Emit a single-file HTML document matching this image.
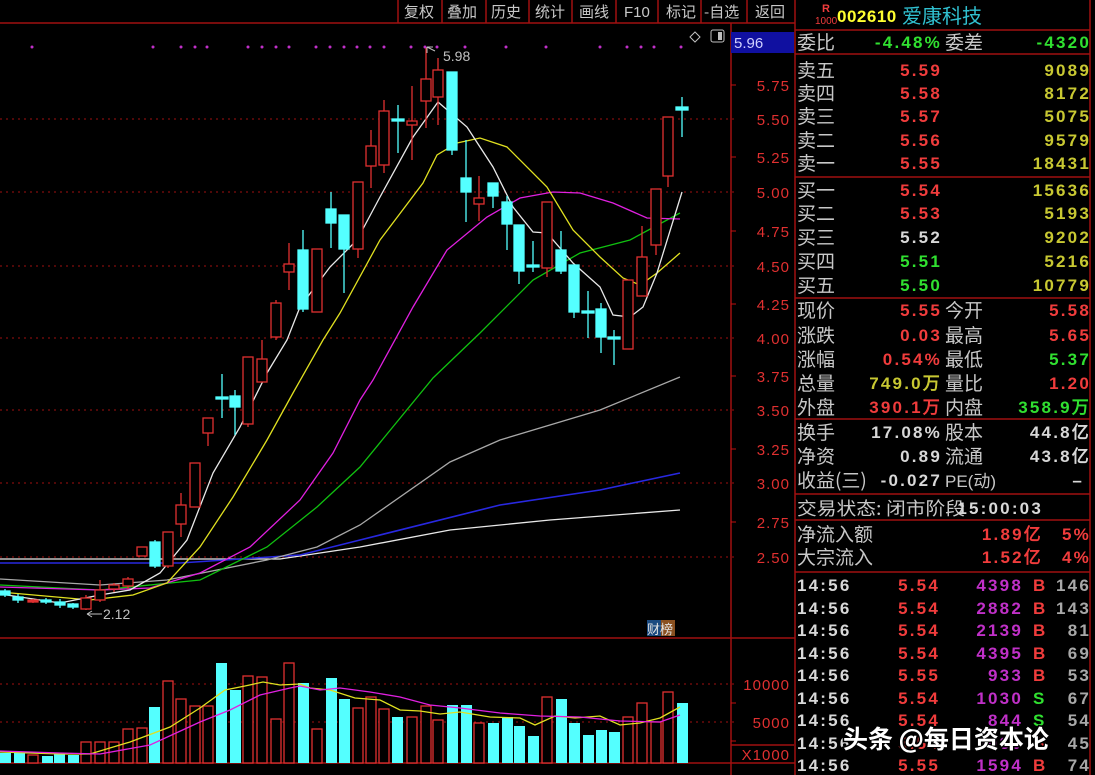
<!DOCTYPE html>
<html><head><meta charset="utf-8"><style>
html,body{margin:0;padding:0;background:#000;width:1095px;height:775px;overflow:hidden}
svg{display:block}
.lb{font-family:"Noto Sans CJK SC","WenQuanYi Zen Hei",sans-serif;font-size:19px;fill:#c8c8c8}
.n{font-family:"Liberation Sans",sans-serif;font-weight:bold;font-size:17px;letter-spacing:2.2px}
.ax{font-family:"Liberation Sans",sans-serif;font-size:15px;fill:#e03030;letter-spacing:1px}
.tb{font-family:"Noto Sans CJK SC",sans-serif;font-size:15px;fill:#c8c8c8}
.r{fill:#f03c3c}.g{fill:#30e030}.y{fill:#c8c832}.w{fill:#d8d8d8}.p{fill:#c030c8}
</style></head><body>
<svg width="1095" height="775" xmlns="http://www.w3.org/2000/svg">
<rect width="1095" height="775" fill="#000"/>
<g stroke="#a01010" stroke-width="1.5" fill="none">
<path d="M0 23H795M398 0V23M442 0V23M486 0V23M529 0V23M572 0V23M616 0V23M658 0V23M701 0V23M747 0V23M795 0V775M1090 0V775M731 23V775M795 30H1090M795 54H1090M795 177H1090M795 298H1090M795 419H1090M795 494H1090M795 520H1090M795 572H1090"/>
<path d="M0 638H795M0 763H795M731 745H794"/>
</g>
<g class="tb">
<text x="404" y="17">复权</text><text x="447" y="17">叠加</text><text x="491" y="17">历史</text><text x="535" y="17">统计</text><text x="579" y="17">画线</text>
<text x="624" y="17" font-family="Liberation Sans">F10</text><text x="666" y="17">标记</text><text x="704" y="17">-自选</text><text x="755" y="17">返回</text>
</g>
<g fill="#c030c8">
<circle cx="32" cy="47" r="1.5"/><circle cx="153" cy="47" r="1.5"/><circle cx="181" cy="47" r="1.5"/><circle cx="195" cy="47" r="1.5"/><circle cx="207" cy="47" r="1.5"/><circle cx="248" cy="47" r="1.5"/><circle cx="262" cy="47" r="1.5"/><circle cx="276" cy="47" r="1.5"/><circle cx="289" cy="47" r="1.5"/><circle cx="316" cy="47" r="1.5"/><circle cx="330" cy="47" r="1.5"/><circle cx="344" cy="47" r="1.5"/><circle cx="357" cy="47" r="1.5"/><circle cx="370" cy="47" r="1.5"/><circle cx="384" cy="47" r="1.5"/><circle cx="411" cy="47" r="1.5"/><circle cx="425" cy="47" r="1.5"/><circle cx="437" cy="47" r="1.5"/><circle cx="465" cy="47" r="1.5"/><circle cx="506" cy="47" r="1.5"/><circle cx="546" cy="47" r="1.5"/><circle cx="600" cy="47" r="1.5"/><circle cx="627" cy="47" r="1.5"/><circle cx="641" cy="47" r="1.5"/><circle cx="654" cy="47" r="1.5"/><circle cx="681" cy="47" r="1.5"/>
</g>
<path d="M690 37l5-5 5 5-5 5z" fill="none" stroke="#c0c0c0"/>
<rect x="711" y="30" width="13" height="12" rx="2" fill="none" stroke="#c0c0c0"/><rect x="718" y="32" width="4" height="8" fill="#c0c0c0"/>
<rect x="731" y="32" width="63" height="21" fill="#1010a0"/>
<text x="734" y="48" font-family="Liberation Sans" font-size="15" fill="#d0d0ff">5.96</text>
<g stroke="#a01010" stroke-dasharray="2,4" stroke-width="1">
<path d="M0 119H736M0 192H736M0 266H736M0 338H736M0 410H736M0 483H736M0 557H736M0 684H736M0 722H736"/>
</g>
<g stroke="#c01010"><path d="M731 85h5M731 157h5M731 231h5M731 304h5M731 376h5M731 449h5M731 522h5M731 703h5M731 741h5"/></g>
<g class="ax" text-anchor="end">
<text x="790" y="91">5.75</text><text x="790" y="125">5.50</text><text x="790" y="163">5.25</text><text x="790" y="198">5.00</text><text x="790" y="237">4.75</text><text x="790" y="272">4.50</text><text x="790" y="310">4.25</text><text x="790" y="344">4.00</text><text x="790" y="382">3.75</text><text x="790" y="416">3.50</text><text x="790" y="455">3.25</text><text x="790" y="489">3.00</text><text x="790" y="528">2.75</text><text x="790" y="563">2.50</text>
<text x="790" y="690">10000</text><text x="790" y="728">5000</text><text x="790" y="760">X1000</text>
</g>
<g fill="none" stroke-width="1.3">
<polyline stroke="#e8e8e8" points="0,559 280,559 360,547 450,530 550,520 680,510"/>
<polyline stroke="#2828e0" stroke-width="1.6" points="0,563 180,563 300,555 360,540 500,505 600,490 680,473"/>
<polyline stroke="#a8a8a8" points="0,579 100,585 167,580 267,560 317,547 360,525 450,462 500,440 600,410 680,377"/>
<polyline stroke="#10c010" points="0,585 100,590 200,580 267,547 317,507 360,467 433,378 480,333 533,280 580,253 630,240 680,213"/>
<polyline stroke="#e020e0" points="0,587 100,590 150,588 200,573 250,547 300,500 333,453 360,400 373,380 413,307 447,250 487,217 520,198 553,192 580,193 613,203 647,218 680,219"/>
<polyline stroke="#e0e020" points="0,592 90,600 133,595 167,583 200,547 233,497 267,440 293,393 323,340 340,313 380,240 423,183 437,155 457,143 480,138 507,147 547,187 573,230 600,257 623,278 640,285 657,273 680,253"/>
<polyline stroke="#e8e8e8" points="0,594 60,603 100,595 130,590 160,573 187,540 213,473 240,427 267,373 287,340 300,307 330,267 357,240 380,197 413,137 438,102 467,127 493,167 513,207 533,232 547,233 573,263 600,287 613,315 630,317 643,307 657,273 682,192"/>
</g>
<g stroke="#e03030" fill="#000" stroke-width="1.3">
<path d="M33 599V603M86 595V610M100 580V602M114 583V592M128 577V589M142 547V556M168 532V568M181 493V537M195 463V507M208 418V446M248 357V427M262 340V382M276 300V340M289 243V290M317 249V312M358 182V258M371 130V188M384 100V173M412 86V160M426 48V128M438 58V125M479 176V221M547 202V277M628 280V349M642 226V296M656 189V255M668 117V187"/>
<rect x="28" y="600" width="10" height="2" fill="#e03030"/>
<rect x="81" y="598" width="10" height="11"/><rect x="95" y="590" width="10" height="10"/><rect x="109" y="585" width="10" height="4"/><rect x="123" y="579" width="10" height="7"/><rect x="137" y="547" width="10" height="9"/><rect x="163" y="532" width="10" height="34"/><rect x="176" y="505" width="10" height="19"/><rect x="190" y="463" width="10" height="44"/><rect x="203" y="418" width="10" height="15"/><rect x="243" y="357" width="10" height="67"/><rect x="257" y="359" width="10" height="23"/><rect x="271" y="303" width="10" height="34"/><rect x="284" y="264" width="10" height="8"/><rect x="312" y="249" width="10" height="63"/><rect x="353" y="182" width="10" height="67"/><rect x="366" y="146" width="10" height="20"/><rect x="379" y="111" width="10" height="54"/><rect x="407" y="121" width="10" height="4"/><rect x="421" y="79" width="10" height="22"/><rect x="433" y="70" width="10" height="27"/><rect x="474" y="198" width="10" height="6"/><rect x="542" y="202" width="10" height="66"/><rect x="623" y="280" width="10" height="69"/><rect x="637" y="257" width="10" height="39"/><rect x="651" y="189" width="10" height="56"/><rect x="663" y="117" width="10" height="59"/>
</g>
<g stroke="#54ffff" fill="#54ffff" stroke-width="1.3">
<path d="M5 589V597M18 594V603M46 598V604M60 599V608M73 603V609M155 540V568M222 374V418M235 390V435M303 230V312M331 192V248M344 215V293M398 105V153M452 72V155M466 140V222M493 183V208M507 196V250M519 225V284M533 241V272M561 231V274M574 265V318M588 291V338M601 303V353M614 330V365M682 97V137"/>
<rect x="0" y="591" width="10" height="4"/><rect x="13" y="597" width="10" height="3"/><rect x="41" y="600" width="10" height="2"/><rect x="55" y="602" width="10" height="3"/><rect x="68" y="604" width="10" height="3"/><rect x="150" y="542" width="10" height="24"/><rect x="216" y="397" width="12" height="2"/><rect x="230" y="396" width="10" height="11"/><rect x="298" y="250" width="10" height="59"/><rect x="326" y="209" width="10" height="14"/><rect x="339" y="215" width="10" height="34"/><rect x="392" y="119" width="12" height="2"/><rect x="447" y="72" width="10" height="78"/><rect x="461" y="178" width="10" height="14"/><rect x="488" y="183" width="10" height="13"/><rect x="502" y="202" width="10" height="22"/><rect x="514" y="225" width="10" height="46"/><rect x="527" y="265" width="12" height="2"/><rect x="556" y="250" width="10" height="21"/><rect x="569" y="265" width="10" height="47"/><rect x="582" y="311" width="12" height="2"/><rect x="596" y="309" width="10" height="28"/><rect x="608" y="337" width="12" height="2"/><rect x="676" y="107" width="12" height="3"/>
</g>
<path d="M427 47l8 4M427 47v6M427 47h6" stroke="#c0c0c0" fill="none"/>
<text x="443" y="61" font-family="Liberation Sans" font-size="14" fill="#c0c0c0">5.98</text>
<path d="M87 614h15M87 614l5-3M87 614l5 3" stroke="#c0c0c0" fill="none"/>
<text x="103" y="619" font-family="Liberation Sans" font-size="14" fill="#c0c0c0">2.12</text>
<rect x="647" y="620" width="14" height="16" fill="#1a4a80"/><rect x="661" y="620" width="14" height="16" fill="#8a5020"/>
<text x="647" y="634" font-family="Noto Sans CJK SC" font-size="13" fill="#e0e0e0">财榜</text>
<g stroke="#e03030" fill="#000" stroke-width="1.3">
<rect x="28" y="755" width="10" height="8"/><rect x="81" y="742" width="10" height="21"/><rect x="95" y="742" width="10" height="21"/><rect x="109" y="742" width="10" height="21"/><rect x="123" y="729" width="10" height="34"/><rect x="137" y="728" width="10" height="35"/><rect x="163" y="681" width="10" height="82"/><rect x="176" y="699" width="10" height="64"/><rect x="190" y="706" width="10" height="57"/><rect x="203" y="706" width="10" height="57"/><rect x="243" y="676" width="10" height="87"/><rect x="257" y="677" width="10" height="86"/><rect x="271" y="719" width="10" height="44"/><rect x="284" y="663" width="10" height="100"/><rect x="312" y="729" width="10" height="34"/><rect x="353" y="708" width="10" height="55"/><rect x="366" y="697" width="10" height="66"/><rect x="379" y="709" width="10" height="54"/><rect x="407" y="717" width="10" height="46"/><rect x="421" y="706" width="10" height="57"/><rect x="433" y="720" width="10" height="43"/><rect x="474" y="723" width="10" height="40"/><rect x="542" y="697" width="10" height="66"/><rect x="623" y="717" width="10" height="46"/><rect x="637" y="703" width="10" height="60"/><rect x="651" y="722" width="10" height="41"/><rect x="663" y="692" width="10" height="71"/>
</g>
<g fill="#54ffff">
<rect x="0" y="753" width="11" height="10"/><rect x="14" y="753" width="11" height="10"/><rect x="42" y="756" width="11" height="7"/><rect x="54" y="754" width="11" height="9"/><rect x="68" y="755" width="11" height="8"/><rect x="149" y="707" width="11" height="56"/><rect x="216" y="663" width="11" height="100"/><rect x="230" y="690" width="11" height="73"/><rect x="298" y="683" width="11" height="80"/><rect x="326" y="678" width="11" height="85"/><rect x="339" y="699" width="11" height="64"/><rect x="392" y="717" width="11" height="46"/><rect x="447" y="705" width="11" height="58"/><rect x="461" y="705" width="11" height="58"/><rect x="488" y="723" width="11" height="40"/><rect x="502" y="717" width="11" height="46"/><rect x="514" y="726" width="11" height="37"/><rect x="528" y="736" width="11" height="27"/><rect x="556" y="699" width="11" height="64"/><rect x="569" y="723" width="11" height="40"/><rect x="583" y="735" width="11" height="28"/><rect x="596" y="730" width="11" height="33"/><rect x="609" y="732" width="11" height="31"/><rect x="677" y="703" width="11" height="60"/>
</g>
<g fill="none" stroke-width="1.3">
<polyline stroke="#e0e020" points="0,752 60,754 90,754 130,742 170,727 200,708 225,690 245,686 263,682 280,685 300,684 310,688 330,690 355,698 380,700 400,710 420,711 440,714 460,712 490,717 520,718 535,725 555,716 575,718 600,716 620,725 640,723 660,718 680,707"/>
<polyline stroke="#e020e0" points="0,751 60,753 100,754 150,745 200,722 230,710 260,695 290,688 300,686 320,690 340,688 370,692 400,697 430,705 460,708 500,713 540,716 580,717 620,721 660,722 680,715"/>
</g>
<text x="822" y="12" font-family="Liberation Sans" font-size="11" font-weight="bold" fill="#f03c3c">R</text>
<text x="815" y="24" font-family="Liberation Sans" font-size="10" fill="#f03c3c">1000</text>
<text x="837" y="22" font-family="Liberation Sans" font-weight="bold" font-size="17" fill="#ffff30" letter-spacing="0.5">002610</text>
<text x="902" y="23" font-family="Noto Sans CJK SC" font-size="20" fill="#30c0d0">爱康科技</text>
<g class="lb">
<text x="797" y="49">委比</text><text x="945" y="49">委差</text>
<text x="797" y="77">卖五</text><text x="797" y="100">卖四</text><text x="797" y="123">卖三</text><text x="797" y="147">卖二</text><text x="797" y="170">卖一</text>
<text x="797" y="197">买一</text><text x="797" y="220">买二</text><text x="797" y="244">买三</text><text x="797" y="268">买四</text><text x="797" y="292">买五</text>
<text x="797" y="317">现价</text><text x="945" y="317">今开</text>
<text x="797" y="342">涨跌</text><text x="945" y="342">最高</text>
<text x="797" y="366">涨幅</text><text x="945" y="366">最低</text>
<text x="797" y="390">总量</text><text x="945" y="390">量比</text>
<text x="797" y="414">外盘</text><text x="945" y="414">内盘</text>
<text x="797" y="439">换手</text><text x="945" y="439">股本</text>
<text x="797" y="463">净资</text><text x="945" y="463">流通</text>
<text x="797" y="487">收益(三)</text><text x="945" y="487" font-family="Liberation Sans" font-size="17">PE(动)</text>
<text x="797" y="515" font-size="18" textLength="168" lengthAdjust="spacingAndGlyphs">交易状态: 闭市阶段</text>
<text x="797" y="541">净流入额</text><text x="797" y="564">大宗流入</text>
</g>
<g class="n" text-anchor="end">
<text x="942" y="48" class="g">-4.48%</text><text x="1091" y="48" class="g">-4320</text>
<text x="942" y="76" class="r">5.59</text><text x="1091" y="76" class="y">9089</text>
<text x="942" y="99" class="r">5.58</text><text x="1091" y="99" class="y">8172</text>
<text x="942" y="122" class="r">5.57</text><text x="1091" y="122" class="y">5075</text>
<text x="942" y="146" class="r">5.56</text><text x="1091" y="146" class="y">9579</text>
<text x="942" y="169" class="r">5.55</text><text x="1091" y="169" class="y">18431</text>
<text x="942" y="196" class="r">5.54</text><text x="1091" y="196" class="y">15636</text>
<text x="942" y="219" class="r">5.53</text><text x="1091" y="219" class="y">5193</text>
<text x="942" y="243" class="w">5.52</text><text x="1091" y="243" class="y">9202</text>
<text x="942" y="267" class="g">5.51</text><text x="1091" y="267" class="y">5216</text>
<text x="942" y="291" class="g">5.50</text><text x="1091" y="291" class="y">10779</text>
<text x="942" y="316" class="r">5.55</text><text x="1091" y="316" class="r">5.58</text>
<text x="942" y="341" class="r">0.03</text><text x="1091" y="341" class="r">5.65</text>
<text x="942" y="365" class="r">0.54%</text><text x="1091" y="365" class="g">5.37</text>
<text x="942" y="389" class="y">749.0万</text><text x="1091" y="389" class="r">1.20</text>
<text x="942" y="413" class="r">390.1万</text><text x="1091" y="413" class="g">358.9万</text>
<text x="942" y="438" class="w">17.08%</text><text x="1091" y="438" class="w">44.8亿</text>
<text x="942" y="462" class="w">0.89</text><text x="1091" y="462" class="w">43.8亿</text>
<text x="942" y="486" class="w">-0.027</text><text x="1084" y="486" class="w">–</text>
<text x="1043" y="514" class="w">15:00:03</text>
<text x="1043" y="540" class="r">1.89亿</text><text x="1091" y="540" class="r">5%</text>
<text x="1043" y="563" class="r">1.52亿</text><text x="1091" y="563" class="r">4%</text>
</g>
<g class="n" text-anchor="end">
<g class="w" text-anchor="start"><text x="797" y="591">14:56</text><text x="797" y="614">14:56</text><text x="797" y="636">14:56</text><text x="797" y="659">14:56</text><text x="797" y="681">14:56</text><text x="797" y="704">14:56</text><text x="797" y="726">14:56</text><text x="797" y="749">14:56</text><text x="797" y="771">14:56</text></g>
<g class="r"><text x="940" y="591">5.54</text><text x="940" y="614">5.54</text><text x="940" y="636">5.54</text><text x="940" y="659">5.54</text><text x="940" y="681">5.55</text><text x="940" y="704">5.54</text><text x="940" y="726">5.54</text><text x="940" y="749">5.54</text><text x="940" y="771">5.55</text></g>
<g class="p"><text x="1023" y="591">4398</text><text x="1023" y="614">2882</text><text x="1023" y="636">2139</text><text x="1023" y="659">4395</text><text x="1023" y="681">933</text><text x="1023" y="704">1030</text><text x="1023" y="726">844</text><text x="1023" y="749">1030</text><text x="1023" y="771">1594</text></g>
<g text-anchor="start"><text x="1033" y="591" class="r">B</text><text x="1033" y="614" class="r">B</text><text x="1033" y="636" class="r">B</text><text x="1033" y="659" class="r">B</text><text x="1033" y="681" class="r">B</text><text x="1033" y="704" class="g">S</text><text x="1033" y="726" class="g">S</text><text x="1033" y="749" class="r">B</text><text x="1033" y="771" class="r">B</text></g>
<g fill="#a8a8a8"><text x="1091" y="591">146</text><text x="1091" y="614">143</text><text x="1091" y="636">81</text><text x="1091" y="659">69</text><text x="1091" y="681">53</text><text x="1091" y="704">67</text><text x="1091" y="726">54</text><text x="1091" y="749">45</text><text x="1091" y="771">74</text></g>
</g>
<text x="843" y="748" font-family="Noto Sans CJK SC" font-size="25" fill="#fff" stroke="#000" stroke-width="3" paint-order="stroke" font-weight="bold">头条 @每日资本论</text>
</svg>
</body></html>
